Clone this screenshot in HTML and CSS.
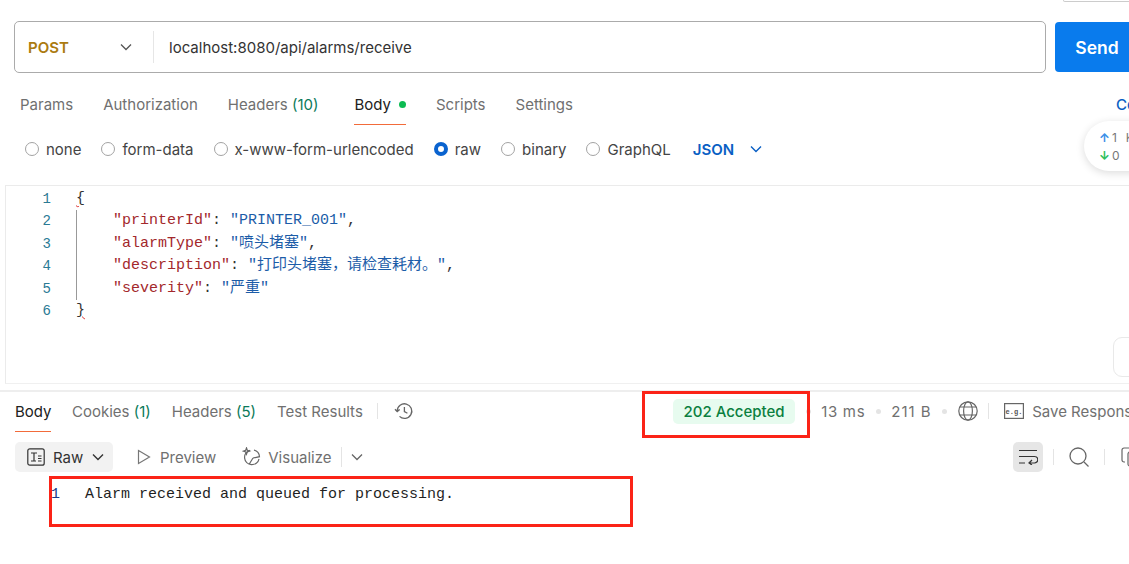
FILE: index.html
```html
<!DOCTYPE html>
<html lang="en">
<head>
<meta charset="utf-8">
<title>Postman request</title>
<link rel="stylesheet" href="styles.css">
</head>
<body>
<div class="app">
  <div class="topline"><span class="top-tick"></span><span class="top-box"></span></div>

  <div class="request-row">
    <div class="url-box">
      <div class="method"><span class="method-name">POST</span>
        <svg class="chev" viewBox="0 0 12 8" width="12" height="8"><path d="M1 1.5l5 5 5-5" fill="none" stroke="#555" stroke-width="1.3"/></svg>
      </div>
      <div class="url">localhost:8080/api/alarms/receive</div>
    </div>
    <button class="send">Send</button>
  </div>

  <div class="req-tabs">
    <span class="tab">Params</span>
    <span class="tab">Authorization</span>
    <span class="tab">Headers <span class="count">(10)</span></span>
    <span class="tab active body-tab">Body<i class="dot"></i></span>
    <span class="tab">Scripts</span>
    <span class="tab">Settings</span>
    <span class="cookies">Cookies</span>
  </div>

  <div class="body-types">
    <label class="radio"><i class="circle"></i>none</label>
    <label class="radio"><i class="circle"></i>form-data</label>
    <label class="radio"><i class="circle"></i>x-www-form-urlencoded</label>
    <label class="radio"><i class="circle on"></i>raw</label>
    <label class="radio"><i class="circle"></i>binary</label>
    <label class="radio"><i class="circle"></i>GraphQL</label>
    <span class="json">JSON
      <svg class="chev" viewBox="0 0 12 8" width="12" height="8"><path d="M1 1.5l5 5 5-5" fill="none" stroke="#0a5fc4" stroke-width="1.4"/></svg>
    </span>
  </div>

  <div class="traffic">
    <div class="t-row"><span class="up">↑</span>1 <span class="kb">KB</span></div>
    <div class="t-row"><span class="down">↓</span>0 <span class="kb">KB</span></div>
  </div>

  <div class="editor">
    <div class="line"><span class="ln">1</span><span class="brace">{</span></div>
    <div class="line"><span class="ln">2</span><span class="guide"></span><span class="key">"printerId"</span>: <span class="str">"PRINTER_001"</span>,</div>
    <div class="line"><span class="ln">3</span><span class="guide"></span><span class="key">"alarmType"</span>: <span class="str">"喷头堵塞"</span>,</div>
    <div class="line"><span class="ln">4</span><span class="guide"></span><span class="key">"description"</span>: <span class="str">"打印头堵塞，请检查耗材。"</span>,</div>
    <div class="line"><span class="ln">5</span><span class="guide"></span><span class="key">"severity"</span>: <span class="str">"严重"</span></div>
    <div class="line"><span class="ln">6</span><span class="brace">}</span></div>
    <div class="beautify"></div>
  </div>

  <div class="response">
    <div class="res-tabs">
      <span class="tab active">Body</span>
      <span class="tab">Cookies <span class="count">(1)</span></span>
      <span class="tab">Headers <span class="count">(5)</span></span>
      <span class="tab">Test Results</span>
      <span class="vsep tabs-sep"></span>
      <svg class="ico hist" viewBox="0 0 20 20" width="20" height="20"><path d="M3.2 10a7.3 7.3 0 1 1 2.3 5.4M1 8.2l2.2 2.4 2.500-2.200M10.400 6v4.600l3 1.700" fill="none" stroke="#666" stroke-width="1.3"/></svg>
      <div class="meta">
        <span class="status">202 Accepted</span>
        <i class="sep-dot"></i><span class="stat-time">13 ms</span>
        <i class="sep-dot"></i><span class="stat-size">211 B</span>
        <i class="sep-dot"></i>
        <svg class="ico" viewBox="0 0 20 20" width="20" height="20"><g fill="none" stroke="#666" stroke-width="1.2"><circle cx="10" cy="10" r="9.2"/><ellipse cx="10" cy="10" rx="4.4" ry="9.2"/><path d="M2 6h16M2 14h16"/></g></svg>
        <span class="vsep"></span>
        <svg class="ico eg" viewBox="0 0 20 16" width="20" height="16"><rect x=".6" y=".6" width="18.8" height="14.8" fill="none" stroke="#666" stroke-width="1.2"/><text x="10" y="10.500" text-anchor="middle" class="eg-text">e.g.</text></svg>
        <span class="save">Save Response</span>
      </div>
    </div>

    <div class="view-row">
      <span class="raw">
        <svg class="ico" viewBox="0 0 18 18" width="18" height="18"><g fill="none" stroke="#333" stroke-width="1.2"><rect x=".8" y=".8" width="16.4" height="16.4" rx="2"/><path d="M4 5h6M7 5v8M4 13h5M11 8h3.500M11 10.500h3.500M11 13h3.500"/></g></svg>
        Raw
        <svg class="chev" viewBox="0 0 12 8" width="12" height="8"><path d="M1 1.500l5 5 5-5" fill="none" stroke="#333" stroke-width="1.400"/></svg>
      </span>
      <span class="view">
        <svg class="ico" viewBox="0 0 14 16" width="14" height="16"><path d="M1.500 1.500L12.500 8 1.500 14.500z" fill="none" stroke="#777" stroke-width="1.200"/></svg>
        Preview
      </span>
      <span class="view vis">
        <svg class="ico" viewBox="0 0 20 20" width="20" height="20"><g fill="none" stroke="#666" stroke-width="1.200"><path d="M8 3.300a7.300 7.300 0 1 0 9 8.700M12 3.200a7.300 7.300 0 0 1 5.500 6.500L11 11M7 17.500l4-6.500"/><path d="M4.500 1l.8 2.300 2.300.8-2.300.8-.8 2.300-.8-2.300-2.300-.8 2.300-.8z"/></g></svg>
        Visualize
      </span>
      <span class="vsep tall"></span>
      <svg class="chev more" viewBox="0 0 12 8" width="12" height="8"><path d="M1 1.500l5 5 5-5" fill="none" stroke="#666" stroke-width="1.300"/></svg>
      <div class="tools">
        <span class="wrap-btn">
          <svg viewBox="0 0 20 16" width="20" height="16"><path d="M1 1.500h18M1 7.500h15.500a3 3 0 0 1 0 6.500H11M14 11l-3 3 3 2M1 14h6" fill="none" stroke="#333" stroke-width="1.200"/></svg>
        </span>
        <span class="vsep"></span>
        <svg class="ico search" viewBox="0 0 20 20" width="20" height="20"><path d="M15 15l4.500 4.500" stroke="#666" stroke-width="1.300"/><circle cx="9" cy="9" r="8" fill="none" stroke="#666" stroke-width="1.300"/></svg>
        <span class="vsep"></span>
        <svg class="ico copy" viewBox="0 0 20 20" width="20" height="20"><g fill="none" stroke="#666" stroke-width="1.200"><path d="M4 15H3a2 2 0 0 1-2-2V3a2 2 0 0 1 2-2h8a2 2 0 0 1 2 2"/><rect x="7" y="5" width="12" height="14" rx="2"/></g></svg>
      </div>
    </div>

    <div class="output"><span class="out-ln">1</span>Alarm received and queued for processing.</div>
  </div>

  <div class="mark mark-status"></div>
  <div class="mark mark-output"></div>
</div>
</body>
</html>
```
FILE: styles.css
```css
* { box-sizing: border-box; }
html, body { margin: 0; height: 100%; overflow: hidden; background: #fff; }
body { font-family: Inter, "Noto Sans CJK SC", sans-serif; font-size: 15px; color: #6b6b6b; }
.app { position: relative; width: 1129px; height: 564px; overflow: hidden; }

.topline { height: 21px; display: flex; align-items: flex-start; }
.top-tick { width: 1px; height: 2px; margin-left: 1021px; background: #e4e4e4; }
.top-box { width: 80px; height: 2px; margin-left: 42px; border: 1px solid #ccc; border-top: 0; border-radius: 0 0 4px 4px; flex: none; }

.request-row { display: flex; width: 1200px; padding-left: 14px; gap: 9px; align-items: center; }
.url-box { width: 1032px; height: 52px; border: 1px solid #ababab; border-radius: 5px; display: flex; align-items: center; }
.method { width: 139px; height: 32px; border-right: 1px solid #e6e6e6; display: flex; align-items: center; justify-content: space-between; padding: 0 21px 0 13px; }
.method-name { font-weight: 600; font-size: 15px; color: #ab7b10; }
.url { padding-left: 15px; font-size: 15px; color: #333; }
.send { width: 120px; height: 50px; border: 0; border-radius: 4px; background: #097bed; color: #fff; font: 600 17.500px Inter, sans-serif; padding: 0 36px 0 0; text-align: center; }

.req-tabs { height: 52px; display: flex; align-items: center; gap: 30px; padding: 12px 0 0 20px; position: relative; }
.tab { display: inline-flex; align-items: center; height: 40px; white-space: pre; color: #707070; }
.tab.active { color: #212121; box-shadow: inset 0 -1px 0 #f26b3a; }
.body-tab { margin-left: 6px; }
.req-tabs .tab { padding-bottom: 1px; }
.count { color: #0b7a5a; }
.dot { width: 7px; height: 7px; border-radius: 50%; background: #0cbb52; margin-left: 8px; }
.cookies { position: absolute; left: 1116px; top: 22px; color: #0a5fc4; font-weight: 500; }

.body-types { height: 60px; display: flex; align-items: center; padding: 0 0 12px 25px; gap: 20px; color: #444; }
.radio { display: flex; align-items: center; gap: 7px; }
.circle { width: 14px; height: 14px; border: 1px solid #a3a3a3; border-radius: 50%; }
.circle.on { border: 4px solid #0a63cf; }
.json { display: flex; align-items: center; gap: 16px; margin-left: 2px; color: #0a5fc4; font-weight: 600; }

.traffic { position: absolute; left: 1084px; top: 121px; width: 90px; height: 50px; border-radius: 25px; background: #fff; box-shadow: 0 2px 8px rgba(0,0,0,.14); padding: 8px 0 0 15px; font-size: 12px; color: #777; z-index: 2; }
.t-row { line-height: 18px; height: 18px; display: flex; gap: 2px; }
.up { color: #3b8fe8; font-weight: 700; }
.down { color: #2fbf5c; font-weight: 700; }
.kb { margin-left: 7px; }

.editor { position: relative; height: 199px; margin-left: 5px; border-top: 1px solid #ebebeb; border-left: 1px solid #ebebeb; border-bottom: 1px solid #f0f0f0; padding-top: 1.800px; font-family: "Liberation Mono", "Noto Sans CJK SC", monospace; font-size: 15px; color: #333; }
.line { height: 22.500px; line-height: 22.500px; display: flex; white-space: pre; align-items: center; }
.ln { width: 45px; text-align: right; color: #2a7a94; font-size: 14px; flex: none; }
.brace { margin-left: 25px; color: #333; text-decoration: underline wavy #d33 1px; }
.guide { width: 1px; height: 100%; margin-left: 25px; margin-right: 36px; background: #999; flex: none; }
.key { color: #a3282c; }
.str { color: #1c5ca8; }
.beautify { position: absolute; left: 1107px; top: 151px; width: 40px; height: 40px; border: 1px solid #e9e9e9; border-radius: 9px; }

.response { margin-top: 6px; border-top: 2px solid #eee; }
.res-tabs { height: 40px; display: flex; align-items: center; padding-left: 15px; gap: 21px; position: relative; }
.res-tabs .tab { height: 40px; padding-bottom: 2px; }
.res-tabs > .tab:first-child { width: 36px; }
.vsep { width: 1px; height: 16px; background: #e4e4e4; flex: none; }
.vsep.tall { height: 20px; margin-left: 9px; }
.tabs-sep { margin: 0 0 2px -7px; }
.hist { margin: 0 0 2px -5px; }
.ico { flex: none; display: block; }
.meta { position: absolute; left: 673px; top: 0; height: 40px; padding-bottom: 2px; display: flex; align-items: center; gap: 10.500px; color: #707070; white-space: nowrap; }
.status { background: #e7fbef; color: #0b7f3f; font-weight: 500; border-radius: 5px; height: 25px; line-height: 25px; padding: 0 10.500px; }
.stat-time { letter-spacing: .7px; }
.stat-size { letter-spacing: 1px; }
.sep-dot { width: 5px; height: 5px; border-radius: 50%; background: #e4e4e4; }
.eg { margin-left: 4px; }
.eg-text { font: 700 7px "Liberation Mono", monospace; fill: #555; }
.save { margin-left: -2px; }

.view-row { height: 30px; margin-top: 10px; padding-left: 15px; display: flex; align-items: center; position: relative; }
.raw { width: 98px; height: 30px; background: #f2f2f2; border-radius: 5px; display: flex; align-items: center; gap: 8px; padding-left: 12px; color: #333; }
.raw .chev { margin-left: 1px; }
.view { display: flex; align-items: center; gap: 9px; margin-left: 24px; color: #707070; }
.vis { margin-left: 26px; gap: 6px; }
.more { margin-left: 9px; }
.tools { position: absolute; left: 1013px; top: 0; height: 30px; display: flex; align-items: center; gap: 10px; }
.search { margin: 0 5px; }
.copy { margin-left: 6px; }
.wrap-btn { width: 30px; height: 30px; background: #e6e6e6; border-radius: 5px; display: flex; align-items: center; justify-content: center; }

.output { margin-top: 12px; padding-left: 51px; height: 22px; line-height: 22px; font-family: "Liberation Mono", monospace; font-size: 15px; color: #1f1f1f; white-space: pre; }
.out-ln { display: inline-block; width: 34px; color: #1a3a8a; }

.mark { position: absolute; border: 3px solid #fb2317; }
.mark-status { left: 642px; top: 391px; width: 168px; height: 47px; }
.mark-output { left: 49px; top: 476px; width: 584px; height: 51px; }
```
